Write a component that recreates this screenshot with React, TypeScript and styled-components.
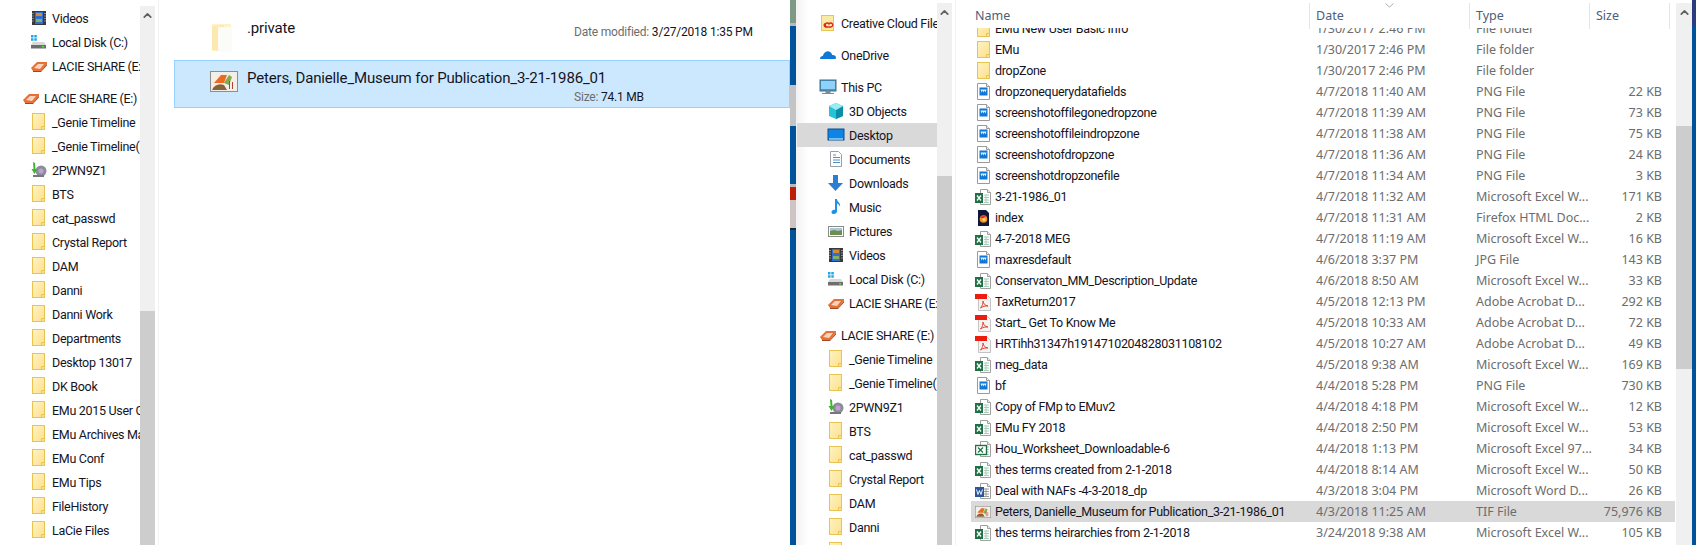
import styled, { createGlobalStyle } from "styled-components";
import { ChevronUp } from "lucide-react";

const GlobalStyle = createGlobalStyle`
  html, body {
    margin: 0;
    height: 100%;
    overflow: hidden;
    background: #fff;
  }
  body {
    font-family: Roboto, "Noto Sans", "Liberation Sans", sans-serif;
    font-size: 12.5px;
    color: #14141e;
  }
`;

type NavEntry = { label: string; icon: string; top?: boolean; gap?: boolean; active?: boolean };
type FileEntry = { name: string; icon: string; date: string; type: string; size: string; selected?: boolean };

const folder = (label: string): NavEntry => ({ label, icon: "folder" });

const leftNav: NavEntry[] = [
  { label: "Videos", icon: "videos" },
  { label: "Local Disk (C:)", icon: "disk" },
  { label: "LACIE SHARE (E:)", icon: "lacie" },
  { label: "LACIE SHARE (E:)", icon: "lacie", top: true, gap: true },
  folder("_Genie Timeline"),
  folder("_Genie Timeline(1)"),
  { label: "2PWN9Z1", icon: "network" },
  folder("BTS"),
  folder("cat_passwd"),
  folder("Crystal Report"),
  folder("DAM"),
  folder("Danni"),
  folder("Danni Work"),
  folder("Departments"),
  folder("Desktop 13017"),
  folder("DK Book"),
  folder("EMu 2015 User Guide"),
  folder("EMu Archives Manual"),
  folder("EMu Conf"),
  folder("EMu Tips"),
  folder("FileHistory"),
  folder("LaCie Files"),
];

const rightNav: NavEntry[] = [
  { label: "Creative Cloud Files", icon: "cc", top: true },
  { label: "OneDrive", icon: "onedrive", top: true, gap: true },
  { label: "This PC", icon: "pc", top: true, gap: true },
  { label: "3D Objects", icon: "cube" },
  { label: "Desktop", icon: "desktop", active: true },
  { label: "Documents", icon: "docs" },
  { label: "Downloads", icon: "download" },
  { label: "Music", icon: "music" },
  { label: "Pictures", icon: "pictures" },
  { label: "Videos", icon: "videos" },
  { label: "Local Disk (C:)", icon: "disk" },
  { label: "LACIE SHARE (E:)", icon: "lacie" },
  { label: "LACIE SHARE (E:)", icon: "lacie", top: true, gap: true },
  folder("_Genie Timeline"),
  folder("_Genie Timeline(1)"),
  { label: "2PWN9Z1", icon: "network" },
  folder("BTS"),
  folder("cat_passwd"),
  folder("Crystal Report"),
  folder("DAM"),
  folder("Danni"),
  folder("Danni Work"),
];

const EXCEL = "Microsoft Excel W...";
const PDF = "Adobe Acrobat D...";

const files: FileEntry[] = [
  { name: "EMu New User Basic Info", icon: "folder", date: "1/30/2017 2:46 PM", type: "File folder", size: "" },
  { name: "EMu", icon: "folder", date: "1/30/2017 2:46 PM", type: "File folder", size: "" },
  { name: "dropZone", icon: "folder", date: "1/30/2017 2:46 PM", type: "File folder", size: "" },
  { name: "dropzonequerydatafields", icon: "image", date: "4/7/2018 11:40 AM", type: "PNG File", size: "22 KB" },
  { name: "screenshotoffilegonedropzone", icon: "image", date: "4/7/2018 11:39 AM", type: "PNG File", size: "73 KB" },
  { name: "screenshotoffileindropzone", icon: "image", date: "4/7/2018 11:38 AM", type: "PNG File", size: "75 KB" },
  { name: "screenshotofdropzone", icon: "image", date: "4/7/2018 11:36 AM", type: "PNG File", size: "24 KB" },
  { name: "screenshotdropzonefile", icon: "image", date: "4/7/2018 11:34 AM", type: "PNG File", size: "3 KB" },
  { name: "3-21-1986_01", icon: "excel", date: "4/7/2018 11:32 AM", type: EXCEL, size: "171 KB" },
  { name: "index", icon: "firefox", date: "4/7/2018 11:31 AM", type: "Firefox HTML Doc...", size: "2 KB" },
  { name: "4-7-2018 MEG", icon: "excel", date: "4/7/2018 11:19 AM", type: EXCEL, size: "16 KB" },
  { name: "maxresdefault", icon: "image", date: "4/6/2018 3:37 PM", type: "JPG File", size: "143 KB" },
  { name: "Conservaton_MM_Description_Update", icon: "excel", date: "4/6/2018 8:50 AM", type: EXCEL, size: "33 KB" },
  { name: "TaxReturn2017", icon: "pdf", date: "4/5/2018 12:13 PM", type: PDF, size: "292 KB" },
  { name: "Start_ Get To Know Me", icon: "pdf", date: "4/5/2018 10:33 AM", type: PDF, size: "72 KB" },
  { name: "HRTihh31347h1914710204828031108102", icon: "pdf", date: "4/5/2018 10:27 AM", type: PDF, size: "49 KB" },
  { name: "meg_data", icon: "excel", date: "4/5/2018 9:38 AM", type: EXCEL, size: "169 KB" },
  { name: "bf", icon: "image", date: "4/4/2018 5:28 PM", type: "PNG File", size: "730 KB" },
  { name: "Copy of FMp to EMuv2", icon: "excel", date: "4/4/2018 4:18 PM", type: EXCEL, size: "12 KB" },
  { name: "EMu FY 2018", icon: "excel", date: "4/4/2018 2:50 PM", type: EXCEL, size: "53 KB" },
  { name: "Hou_Worksheet_Downloadable-6", icon: "excel97", date: "4/4/2018 1:13 PM", type: "Microsoft Excel 97...", size: "34 KB" },
  { name: "thes terms created from 2-1-2018", icon: "excel", date: "4/4/2018 8:14 AM", type: EXCEL, size: "50 KB" },
  { name: "Deal with NAFs -4-3-2018_dp", icon: "word", date: "4/3/2018 3:04 PM", type: "Microsoft Word D...", size: "26 KB" },
  { name: "Peters, Danielle_Museum for Publication_3-21-1986_01", icon: "tif", date: "4/3/2018 11:25 AM", type: "TIF File", size: "75,976 KB", selected: true },
  { name: "thes terms heirarchies from 2-1-2018", icon: "excel", date: "3/24/2018 9:38 AM", type: EXCEL, size: "105 KB" },
];

const stripPieces = [
  { h: 23, c: "#7c9a86" },
  { h: 3, c: "#b9b9b9" },
  { h: 59, c: "#00539b" },
  { h: 41, c: "#c4c4c4" },
  { h: 58, c: "#00539b" },
  { h: 3, c: "#b9b9b9" },
  { h: 13, c: "#bd1e06" },
  { h: 28, c: "#cfc4c4" },
  { h: 2, c: "#1c2430" },
  { h: 315, c: "#00539b" },
];

const FolderArt = () => (
  <g>
    <defs>
      <linearGradient id="folderFill" x1="0" y1="0" x2="1" y2="1">
        <stop offset="0" stopColor="#fff3c4" />
        <stop offset="1" stopColor="#fde08a" />
      </linearGradient>
    </defs>
    <rect x="2.5" y="0.5" width="12" height="16" fill="url(#folderFill)" stroke="#eac452" />
    <path d="M11.5 16.500v-3h3" fill="none" stroke="#eac452" />
  </g>
);

const ImageArt = () => (
  <g>
    <path d="M2.500 0.500h9l3 3v13h-12z" fill="#fff" stroke="#9a9a9a" />
    <path d="M11.500 0.500v3h3" fill="#eee" stroke="#9a9a9a" />
    <rect x="4.500" y="4.500" width="8" height="8" fill="#0f78d4" />
    <path d="M5.500 6.500h6l-1 3-1-2-1 2-1-2-1 2z" fill="#dff0ff" />
  </g>
);

const SheetArt = ({ line }: { line: string }) => (
  <g>
    <path d="M5.500 1.500h7l3 3v12h-10z" fill="#fff" stroke="#a0a0a0" />
    <path d="M12.500 1.500v3h3" fill="#eee" stroke="#a0a0a0" />
    <path d="M9 7h5M9 9.500h5M9 12h5M9 14.500h5M11 6.500v8.500" stroke={line} />
  </g>
);

const ExcelArt = () => (
  <g>
    <SheetArt line="#a9cdb6" />
    <rect x="0" y="5" width="8" height="10" fill="#1e7145" />
    <path d="M2 7.500l4 5M6 7.500l-4 5" stroke="#fff" strokeWidth="1.300" />
  </g>
);

const Excel97Art = () => (
  <g>
    <SheetArt line="#a9cdb6" />
    <rect x="0.500" y="5.500" width="11" height="9" fill="#fff" stroke="#1e7145" strokeWidth="1.400" />
    <path d="M3 7.500l5 5M8 7.500l-5 5" stroke="#1e7145" strokeWidth="1.200" />
  </g>
);

const WordArt = () => (
  <g>
    <SheetArt line="#9a9a9a" />
    <rect x="0" y="5" width="9" height="10" fill="#2b579a" />
    <path d="M1.500 7.500l1.500 5 1.500-4 1.500 4 1.500-5" fill="none" stroke="#fff" strokeWidth="0.900" />
  </g>
);

const PdfArt = () => (
  <g>
    <path d="M3.500 2.500h9l3 3v12h-12z" fill="#f3f3f3" stroke="#c4c4c4" />
    <path d="M0 1h12v5H0z" fill="#ee1c0c" />
    <path d="M5.500 15c2-2 2.500-5 2.500-7 .5 3 2 4.500 5 5-3-.2-5 .2-7.500 2z" fill="none" stroke="#e2452f" />
  </g>
);

const FirefoxArt = () => (
  <g>
    <path d="M3 1h8l3 3v13H3z" fill="#10163c" />
    <circle cx="8.500" cy="10" r="3.800" fill="#f7941d" />
    <path d="M5 9c1-2.500 4-3.300 6.500-1.500-1.500 0-2 .5-2.500 1.500z" fill="#e8352b" />
    <circle cx="9" cy="10.500" r="1.500" fill="#ffd86b" />
  </g>
);

const TifArt = () => (
  <g>
    <rect x="0.500" y="0.500" width="27" height="20" fill="#f2efe6" stroke="#8d8d8d" />
    <path d="M4 12l7-8h6l-3 8z" fill="#ee6a24" />
    <path d="M14 12l5-8 3 2-3 8z" fill="#86a84f" />
    <path d="M2 19c2-5 7-7 12-5l3 5z" fill="#8a6238" />
    <path d="M19 10h1v8h-1zM22 11h1v7h-1z" fill="#b3413b" />
  </g>
);

const navArt: Record<string, React.ReactNode> = {
  folder: <FolderArt />,
  videos: (
    <g>
      <rect x="2" y="2" width="14" height="14" fill="#38383e" />
      <rect x="5" y="3" width="8" height="12" fill="#2f6fd0" />
      <path d="M6 4h6v3H6z" fill="#d88a30" />
      <path d="M6 10h6v3H6z" fill="#88b060" />
      <path d="M3 4v10M15 4v10" stroke="#d8d8d8" strokeDasharray="1 1.500" />
    </g>
  ),
  disk: (
    <g>
      <path d="M1 2h2.500v2.500H1zM4.300 2h2.500v2.500H4.300zM1 5.300h2.500v2.500H1zM4.300 5.300h2.500v2.500H4.300z" fill="#1fa8e8" />
      <path d="M3 9h11l2 3H1z" fill="#d8d8d8" />
      <rect x="1" y="12" width="15" height="3.500" fill="#6e6e6e" />
      <rect x="12" y="13" width="2" height="1.500" fill="#56e030" />
    </g>
  ),
  lacie: (
    <g>
      <path d="M1 11l6-6h10v2l-6 7H3z" fill="#e86f36" />
      <path d="M4 11l4-4h6l-4 5z" fill="#f9d4bd" />
      <path d="M3 14h8l6-7v1.500l-6 6.500H3z" fill="#9c4a24" />
    </g>
  ),
  network: (
    <g>
      <circle cx="11" cy="10" r="5.500" fill="#8c8c9c" />
      <circle cx="11" cy="10" r="2.500" fill="#c0a0d0" />
      <rect x="3" y="14" width="11" height="2" fill="#777" />
      <path d="M3 1l2 1 .5 6h2L4.500 13 1.500 8h2z" fill="#3fb52c" />
    </g>
  ),
  cc: (
    <g>
      <rect x="2.500" y="1.500" width="12" height="15" fill="#fde9a6" stroke="#eac452" />
      <path d="M8 12a2 2 0 1 1 2-3 2 2 0 1 1 2 3H6.500a2 2 0 0 1-.5-3.500" fill="none" stroke="#da2a1a" strokeWidth="1.400" transform="translate(0 1)" />
    </g>
  ),
  onedrive: (
    <path d="M1 13c0-2 1.200-3 2.800-3C4.500 7 7 4.500 10 5.500c1.800.6 3 2 3.200 3.500 2-.3 3.800 1 3.800 2.500 0 1-.5 1.500-1 1.500z" fill="#0f78d4" />
  ),
  pc: (
    <g>
      <rect x="1" y="2" width="16" height="11" fill="#2ba0e8" stroke="#56666f" />
      <rect x="2" y="3" width="14" height="8" fill="#8ed3f7" />
      <path d="M7 13h4v2H7zM3 15.500h12" stroke="#7b8b93" fill="#7b8b93" />
    </g>
  ),
  cube: (
    <g>
      <path d="M9 1l7 3v10l-7 3-7-3V4z" fill="#24c4d8" />
      <path d="M9 8l7-4v10l-7 3z" fill="#0c8ea8" />
      <path d="M2 4l7-3 7 3-7 4z" fill="#9ceaf2" />
    </g>
  ),
  desktop: (
    <g>
      <rect x="1" y="3" width="16" height="11" fill="#0f84e6" stroke="#0a4f8f" />
      <path d="M2 13h14" stroke="#dff" />
    </g>
  ),
  docs: (
    <g>
      <path d="M3.500 1.500h8l3 3v12h-11z" fill="#fff" stroke="#9aa0a8" />
      <path d="M6 5h3M6 7.500h7M6 10h7M6 12.500h7" stroke="#4a8fd0" />
    </g>
  ),
  download: <path d="M6 1h5v8h5l-7.500 8L1 9h5z" fill="#2a7fd4" />,
  music: <path d="M8 1h2c0 3 4 3.500 3 8-.5-2-1.500-3-3-3.500V13c0 2-2 3.500-4 3-2-.5-2-3 0-4 .7-.3 1.400-.3 2 0z" fill="#1e90e8" />,
  pictures: (
    <g>
      <rect x="1.500" y="4.500" width="15" height="10" fill="#fff" stroke="#8a8a8a" />
      <path d="M3 6h12v3H3z" fill="#a8c8d8" />
      <path d="M3 9l4-1 4 1 4-1v5H3z" fill="#6e8e50" />
    </g>
  ),
};

const fileArt: Record<string, React.ReactNode> = {
  folder: <FolderArt />,
  image: <ImageArt />,
  excel: <ExcelArt />,
  excel97: <Excel97Art />,
  word: <WordArt />,
  pdf: <PdfArt />,
  firefox: <FirefoxArt />,
};

const Scrollbar = ({ top, thumbOffset, thumbHeight, width = 15 }: { top: number; thumbOffset: number; thumbHeight?: number; width?: number }) => (
  <Track $top={top} $width={width}>
    <ArrowUp>
      <ChevronUp size={13} strokeWidth={3.2} color="#606060" />
    </ArrowUp>
    <Thumb $offset={thumbOffset} $height={thumbHeight} />
  </Track>
);

const NavList = ({ items }: { items: NavEntry[] }) => (
  <>
    {items.map((item, ind) => (
      <NavRow key={ind} $top={item.top} $gap={item.gap} $active={item.active}>
        <svg width="18" height="18" viewBox="0 0 18 18">{navArt[item.icon]}</svg>
        <NavLabel>{item.label}</NavLabel>
      </NavRow>
    ))}
  </>
);

export default function App() {
  return (
    <Screen>
      <GlobalStyle />
      <Window $width={790}>
        <NavPane $pad={6} $width={140}>
          <NavList items={leftNav} />
        </NavPane>
        <Scrollbar top={6} thumbOffset={287} />
        <PaneDivider />
        <ContentPane>
          <Tile>
            <TileIcon $end={12}>
              <svg width="24" height="30" viewBox="0 0 24 30">
                <path d="M1 1h19v27H1z" fill="#fdf2c9" />
                <path d="M1 3l12-1v27l-12-2z" fill="#fbe9b0" />
                <path d="M7 4h14v25H7z" fill="#fbfbf8" />
              </svg>
            </TileIcon>
            <TileName>.private</TileName>
            <TileMeta $drop={6}>
              <MetaKey>Date modified:</MetaKey> 3/27/2018 1:35 PM
            </TileMeta>
          </Tile>
          <Tile $selected>
            <TileIcon $end={9}>
              <svg width="28" height="21" viewBox="0 0 28 21">
                <TifArt />
              </svg>
            </TileIcon>
            <TileName $drop={2}>Peters, Danielle_Museum for Publication_3-21-1986_01</TileName>
            <TileMeta $drop={23}>
              <MetaKey>Size:</MetaKey> 74.1 MB
            </TileMeta>
          </Tile>
        </ContentPane>
      </Window>
      <DesktopStrip $width={6}>
        {stripPieces.map((piece, ind) => (
          <StripPiece key={ind} $height={piece.h} $color={piece.c} />
        ))}
      </DesktopStrip>
      <Window $width={896}>
        <NavPane $pad={11} $width={141} $inset>
          <NavList items={rightNav} />
        </NavPane>
        <Scrollbar top={3} thumbOffset={155} />
        <PaneDivider />
        <ListPane>
          <HeaderRow>
            <HeaderCell>Name</HeaderCell>
            <HeaderCell $pad={6}>
              Date
              <SortMark width="9" height="5" viewBox="0 0 9 5">
                <path d="M.5.500l4 3.500 4-3.500" fill="none" stroke="#a8b0b8" />
              </SortMark>
            </HeaderCell>
            <HeaderCell $pad={6}>Type</HeaderCell>
            <HeaderCell $pad={6}>Size</HeaderCell>
          </HeaderRow>
          <ListClip>
            <ListScroll>
              {files.map((file, ind) => (
                <FileRow key={ind} $selected={file.selected}>
                  <NameCell>
                    {file.icon === "tif" ? (
                      <svg width="16" height="12" viewBox="0 0 28 21">
                        <TifArt />
                      </svg>
                    ) : (
                      <svg width="16" height="18" viewBox="0 0 16 18">{fileArt[file.icon]}</svg>
                    )}
                    <span>{file.name}</span>
                  </NameCell>
                  <InfoCell>{file.date}</InfoCell>
                  <InfoCell>{file.type}</InfoCell>
                  <SizeCell>{file.size}</SizeCell>
                </FileRow>
              ))}
            </ListScroll>
          </ListClip>
        </ListPane>
        <Scrollbar top={3} thumbOffset={105} thumbHeight={243} width={16} />
      </Window>
      <DesktopStrip $width={4}>
        <StripPiece $height={25} $color="#2b3d7e" />
        <StripPiece $height={520} $color="#00539b" />
      </DesktopStrip>
    </Screen>
  );
}

const Screen = styled.div`
  display: flex;
  width: 1696px;
  height: 545px;
  overflow: hidden;
  background: #fff;
`;

const Window = styled.div<{ $width: number }>`
  display: flex;
  flex: none;
  width: ${(props) => props.$width}px;
  height: 100%;
  background: #fff;
`;

const DesktopStrip = styled.div<{ $width: number }>`
  display: flex;
  flex-direction: column;
  flex: none;
  width: ${(props) => props.$width}px;
`;

const StripPiece = styled.div<{ $height: number; $color: string }>`
  height: ${(props) => props.$height}px;
  background: ${(props) => props.$color};
`;

const NavPane = styled.div<{ $pad: number; $width: number; $inset?: boolean }>`
  flex: none;
  width: ${(props) => props.$width}px;
  padding-top: ${(props) => props.$pad}px;
  padding-left: ${(props) => (props.$inset ? 1 : 0)}px;
  overflow: hidden;
  box-sizing: border-box;
  background: ${(props) => (props.$inset ? "linear-gradient(90deg, #f2f2f2, #fff 12px)" : "#fff")};
`;

const NavRow = styled.div<{ $top?: boolean; $gap?: boolean; $active?: boolean }>`
  display: flex;
  align-items: center;
  gap: 4px;
  height: 24px;
  padding-left: ${(props) => (props.$top ? 22 : 30)}px;
  margin-top: ${(props) => (props.$gap ? 8 : 0)}px;
  background: ${(props) => (props.$active ? "#d9d9d9" : "transparent")};
  svg {
    flex: none;
  }
`;

const NavLabel = styled.span`
  white-space: nowrap;
  letter-spacing: -0.3px;
`;

const Track = styled.div<{ $top: number; $width: number }>`
  display: flex;
  flex-direction: column;
  flex: none;
  width: ${(props) => props.$width}px;
  margin-top: ${(props) => props.$top}px;
  background: #f0f0f0;
`;

const ArrowUp = styled.div`
  display: flex;
  justify-content: center;
  align-items: center;
  height: 18px;
  flex: none;
`;

const Thumb = styled.div<{ $offset: number; $height?: number }>`
  margin-top: ${(props) => props.$offset}px;
  flex: ${(props) => (props.$height ? "none" : "1")};
  height: ${(props) => (props.$height ? `${props.$height}px` : "auto")};
  background: #cdcdcd;
`;

const PaneDivider = styled.div`
  flex: none;
  width: 1px;
  margin-left: 3px;
  background: #f2f2f2;
`;

const ContentPane = styled.div`
  flex: 1;
  padding: 12px 0 0 15px;
`;

const Tile = styled.div<{ $selected?: boolean }>`
  display: flex;
  height: 48px;
  box-sizing: border-box;
  padding-top: 5px;
  border: 1px solid ${(props) => (props.$selected ? "#99d1ff" : "transparent")};
  background: ${(props) => (props.$selected ? "#cce8ff" : "transparent")};
`;

const TileIcon = styled.div<{ $end: number }>`
  display: flex;
  flex: none;
  width: 72px;
  box-sizing: border-box;
  justify-content: flex-end;
  padding: 5px ${(props) => props.$end}px 0 0;
`;

const TileName = styled.div<{ $drop?: number }>`
  flex: none;
  width: 327px;
  padding-top: ${(props) => props.$drop ?? 0}px;
  font-size: 15px;
  line-height: 20px;
  letter-spacing: -0.15px;
  white-space: nowrap;
`;

const TileMeta = styled.div<{ $drop: number }>`
  padding-top: ${(props) => props.$drop}px;
  font-size: 12px;
  line-height: 16px;
  letter-spacing: -0.2px;
  white-space: nowrap;
`;

const MetaKey = styled.span`
  color: #6d6d6d;
`;

const ListPane = styled.div`
  display: flex;
  flex-direction: column;
  flex: 1;
  min-width: 0;
  padding: 3px 1px 0 15px;
`;

const HeaderRow = styled.div`
  display: grid;
  flex: none;
  grid-template-columns: 339px 160px 120px 80px 1fr;
  height: 25px;
`;

const HeaderCell = styled.div<{ $pad?: number }>`
  position: relative;
  padding-left: ${(props) => props.$pad ?? 4}px;
  border-right: 1px solid #e5e5e5;
  color: #4c607a;
  font-family: "Noto Sans", sans-serif;
  line-height: 26px;
`;

const SortMark = styled.svg`
  position: absolute;
  top: 0;
  left: 75px;
`;

const ListClip = styled.div`
  flex: 1;
  overflow: hidden;
`;

const ListScroll = styled.div`
  margin-top: -10px;
`;

const FileRow = styled.div<{ $selected?: boolean }>`
  display: grid;
  grid-template-columns: 339px 160px 120px 80px 1fr;
  align-items: center;
  height: 21px;
  background: ${(props) => (props.$selected ? "#d9d9d9" : "transparent")};
`;

const NameCell = styled.div`
  display: flex;
  align-items: center;
  gap: 4px;
  padding-left: 4px;
  letter-spacing: -0.3px;
  white-space: nowrap;
  svg {
    flex: none;
  }
`;

const InfoCell = styled.div`
  padding-left: 6px;
  color: #6d6d6d;
  font-family: "Noto Sans", sans-serif;
  white-space: nowrap;
`;

const SizeCell = styled(InfoCell)`
  padding-right: 8px;
  text-align: right;
`;
